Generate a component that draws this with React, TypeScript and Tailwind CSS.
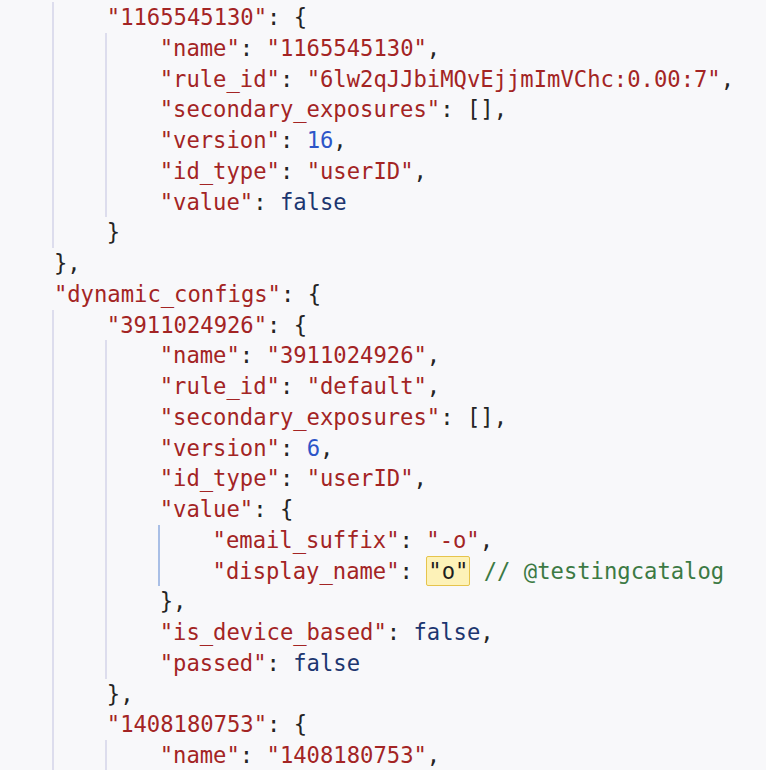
type Tok = [string, string];

const colors: Record<string, string> = {
  k: "text-[#a32424]",
  s: "text-[#a32424]",
  p: "text-[#242424]",
  n: "text-[#2d55c8]",
  b: "text-[#1d3670]",
  c: "text-[#3c7a44]",
};

const lines: { d: number; t: Tok[]; active?: boolean }[] = [
  { d: 2, t: [["k", '"1165545130"'], ["p", ": {"]] },
  { d: 3, t: [["k", '"name"'], ["p", ": "], ["s", '"1165545130"'], ["p", ","]] },
  { d: 3, t: [["k", '"rule_id"'], ["p", ": "], ["s", '"6lw2qJJbiMQvEjjmImVChc:0.00:7"'], ["p", ","]] },
  { d: 3, t: [["k", '"secondary_exposures"'], ["p", ": [],"]] },
  { d: 3, t: [["k", '"version"'], ["p", ": "], ["n", "16"], ["p", ","]] },
  { d: 3, t: [["k", '"id_type"'], ["p", ": "], ["s", '"userID"'], ["p", ","]] },
  { d: 3, t: [["k", '"value"'], ["p", ": "], ["b", "false"]] },
  { d: 2, t: [["p", "}"]] },
  { d: 1, t: [["p", "},"]] },
  { d: 1, t: [["k", '"dynamic_configs"'], ["p", ": {"]] },
  { d: 2, t: [["k", '"3911024926"'], ["p", ": {"]] },
  { d: 3, t: [["k", '"name"'], ["p", ": "], ["s", '"3911024926"'], ["p", ","]] },
  { d: 3, t: [["k", '"rule_id"'], ["p", ": "], ["s", '"default"'], ["p", ","]] },
  { d: 3, t: [["k", '"secondary_exposures"'], ["p", ": [],"]] },
  { d: 3, t: [["k", '"version"'], ["p", ": "], ["n", "6"], ["p", ","]] },
  { d: 3, t: [["k", '"id_type"'], ["p", ": "], ["s", '"userID"'], ["p", ","]] },
  { d: 3, t: [["k", '"value"'], ["p", ": {"]] },
  { d: 4, active: true, t: [["k", '"email_suffix"'], ["p", ": "], ["s", '"-o"'], ["p", ","]] },
  { d: 4, active: true, t: [["k", '"display_name"'], ["p", ": "], ["h", '"o"'], ["p", " "], ["c", "// @testingcatalog"]] },
  { d: 3, t: [["p", "},"]] },
  { d: 3, t: [["k", '"is_device_based"'], ["p", ": "], ["b", "false"], ["p", ","]] },
  { d: 3, t: [["k", '"passed"'], ["p", ": "], ["b", "false"]] },
  { d: 2, t: [["p", "},"]] },
  { d: 2, t: [["k", '"1408180753"'], ["p", ": {"]] },
  { d: 3, t: [["k", '"name"'], ["p", ": "], ["s", '"1408180753"'], ["p", ","]] },
];

export default function App() {
  return (
    <div className="h-[770px] w-[766px] overflow-hidden bg-[#f8f8fa] pt-[2px] font-['DejaVu_Sans_Mono',monospace] text-[22.2px]">
      <div className="ml-[-1px]">
        {lines.map((line, i) => (
          <div key={i} className="flex h-[30.75px] items-center whitespace-pre leading-[30.75px]">
            {Array.from({ length: line.d }).map((_, j) => (
              <span
                key={j}
                className={
                  "h-full w-[52.9px] shrink-0 " +
                  (j === 0
                    ? ""
                    : line.active && j === 3
                    ? "border-l-2 border-[#a9bfe6]"
                    : "border-l-2 border-[#dddded]")
                }
              />
            ))}
            <span className="ml-[2px] flex items-center">
              {line.t.map(([type, text], j) =>
                type === "h" ? (
                  <span
                    key={j}
                    className="flex h-[30px] items-center rounded-[2px] border-[1.5px] border-[#e6c44c] bg-[#fdf2b8] px-[1px] text-[#1e1e1e]"
                  >
                    {text}
                  </span>
                ) : (
                  <span key={j} className={colors[type]}>
                    {text}
                  </span>
                )
              )}
            </span>
          </div>
        ))}
      </div>
    </div>
  );
}
